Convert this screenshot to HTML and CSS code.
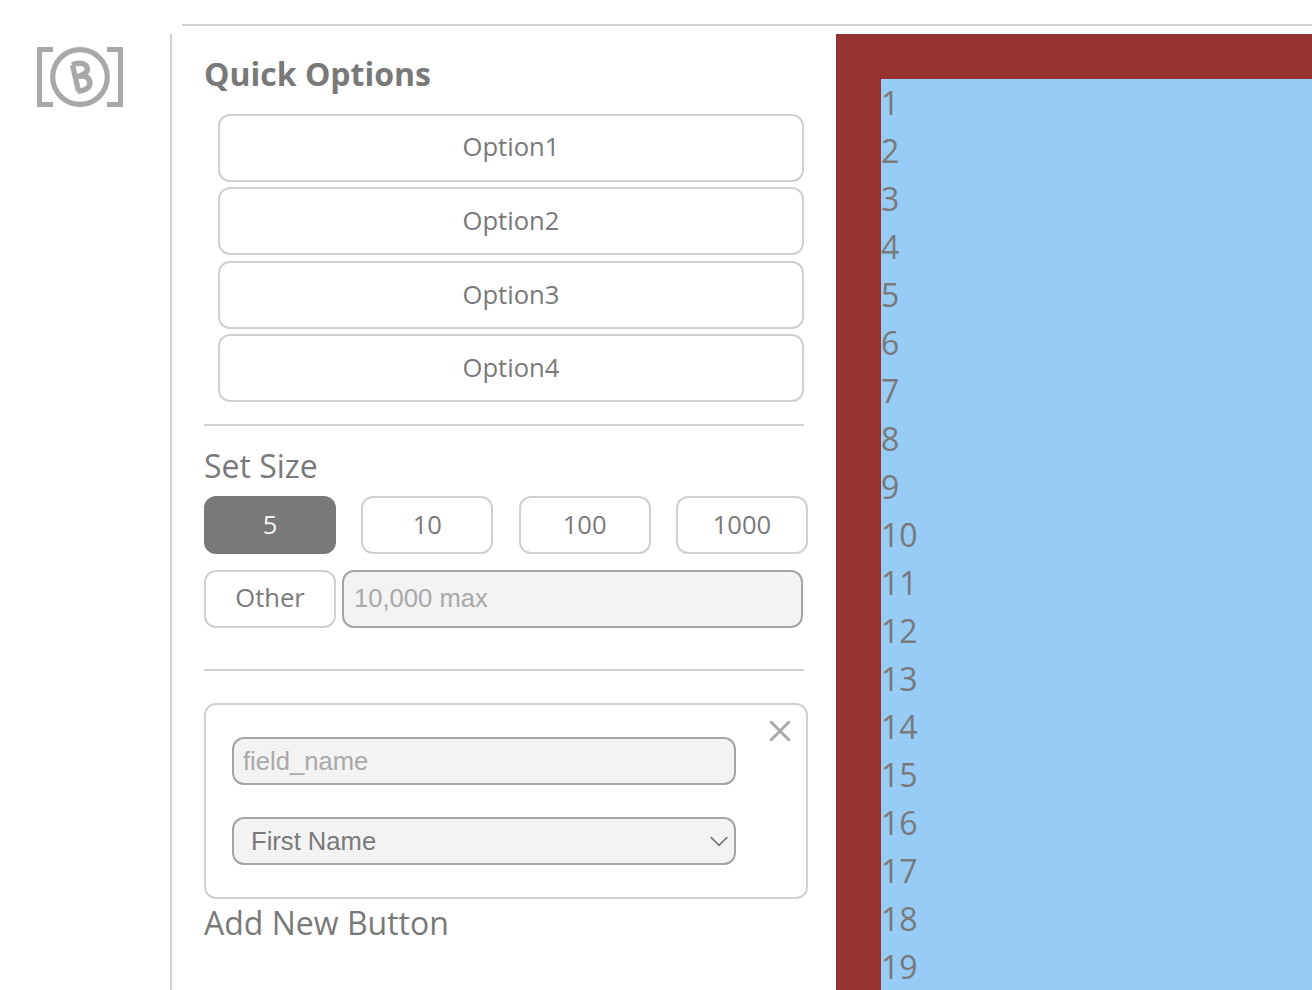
FILE: index.html
```html
<!DOCTYPE html>
<html lang="en">
<head>
<meta charset="utf-8">
<title>Quick Options</title>
<link rel="stylesheet" href="styles.css">
</head>
<body>
<div class="top-rule"></div>
<div class="layout">
  <aside class="brand">
    <svg class="logo" width="86" height="60" viewBox="0 0 86 60" fill="none" stroke="#a8a8a8" stroke-width="5">
      <path d="M16 2.500H2.500V57.500H16M70 2.500H83.500V57.500H70"/>
      <circle cx="43" cy="30" r="27.300" stroke-width="5.200"/>
      <path d="M35.500 18L41.500 44M35 17.700C42 15.300 49.500 15.500 50.300 21.500C50.800 26 46 28.300 38.500 30.500C46 27.300 51.500 29.500 52.700 34.500C54 40.500 48.500 43.500 40.500 44.300" stroke-width="5.400"/>
    </svg>
  </aside>
  <main class="panel">
    <h1 class="title">Quick Options</h1>
    <div class="options">
      <button class="btn option">Option1</button>
      <button class="btn option">Option2</button>
      <button class="btn option">Option3</button>
      <button class="btn option">Option4</button>
    </div>
    <div class="rule"></div>
    <section class="size">
      <div class="label">Set Size</div>
      <div class="sizes">
        <button class="btn small active">5</button>
        <button class="btn small">10</button>
        <button class="btn small">100</button>
        <button class="btn small">1000</button>
      </div>
      <div class="other">
        <button class="btn small">Other</button>
        <input class="field max" placeholder="10,000 max">
      </div>
    </section>
    <div class="rule"></div>
    <section class="card">
      <div class="card-fields">
        <input class="field" placeholder="field_name">
        <div class="field select"><span>First Name</span>
          <svg width="18" height="11" viewBox="0 0 18 11" fill="none" stroke="#797979" stroke-width="1.700"><path d="M.8 1.200L9 9.300L17.200 1.200"/></svg>
        </div>
      </div>
      <svg class="close" width="20" height="20" viewBox="0 0 20 20" stroke="#a8a8a8" stroke-width="3"><path d="M0 0L20 20M20 0L0 20"/></svg>
    </section>
    <div class="label">Add New Button</div>
  </main>
  <div class="preview">
    <div class="lines">
      <div>1</div><div>2</div><div>3</div><div>4</div><div>5</div><div>6</div><div>7</div><div>8</div><div>9</div><div>10</div>
      <div>11</div><div>12</div><div>13</div><div>14</div><div>15</div><div>16</div><div>17</div><div>18</div><div>19</div>
    </div>
  </div>
</div>
</body>
</html>
```
FILE: styles.css
```css
* { box-sizing: border-box; }
body {
  margin: 0;
  height: 990px;
  overflow: hidden;
  display: flex;
  flex-direction: column;
  background: #fff;
  color: #797979;
  font: 32px/48px "Open Sans", sans-serif;
}
.top-rule { flex: none; height: 2px; margin: 24px 0 8px 182px; background: #d0d0d0; }
.layout { flex: 1; min-height: 0; display: flex; }
.brand { flex: none; width: 170px; padding: 13px 0 0 37px; }
.logo { display: block; }
.panel { flex: none; width: 666px; border-left: 2px solid #d0d0d0; padding: 16px 28px 0 32px; }
.title { margin: 0 0 16px; font-size: 32px; line-height: 48px; font-weight: 700; }
.options { display: flex; flex-direction: column; gap: 5.4px; margin: 0 4px 22px 14px; }
.btn {
  display: flex;
  align-items: center;
  justify-content: center;
  margin: 0;
  padding: 0;
  border: 2px solid #d0d0d0;
  border-radius: 12px;
  background: #fff;
  color: #797979;
  font: 25.6px/36px "Open Sans", sans-serif;
}
.option { height: 68px; }
.option:first-child, .other .btn { padding-bottom: 2px; }
.small { width: 132px; height: 58px; }
.active { background: #797979; border-color: #797979; color: #f3f3f3; }
.rule { height: 2px; margin-right: 4px; background: #d0d0d0; }
.size { padding: 16px 0 41px; }
.label { height: 48px; }
.sizes { display: flex; justify-content: space-between; margin: 6px 0 16px; }
.other { display: flex; gap: 6px; }
.field {
  display: block;
  width: 100%;
  height: 48px;
  margin: 0;
  padding: 0 9px;
  border: 2px solid #a5a5a5;
  border-radius: 12px;
  background: #f3f3f3;
  color: #797979;
  font: 25.6px/30px "Liberation Sans", Arial, sans-serif;
}
.field::placeholder { color: #a9a9a9; opacity: 1; }
.max { width: 461px; height: 58px; padding: 0 10px 2px; }
.card {
  display: flex;
  justify-content: space-between;
  height: 196px;
  margin-top: 32px;
  padding: 0 16px 0 26px;
  border: 2px solid #d0d0d0;
  border-radius: 12px;
}
.card-fields { display: flex; flex-direction: column; gap: 32px; width: 504px; padding-top: 32px; }
.select { display: flex; align-items: center; justify-content: space-between; padding: 0 6px 0 17px; }
.close { margin-top: 16px; }
.preview { flex: 1; padding: 45px 0 0 45px; background: #963330; }
.lines { height: 100%; overflow: hidden; background: #96ccf6; }
```
